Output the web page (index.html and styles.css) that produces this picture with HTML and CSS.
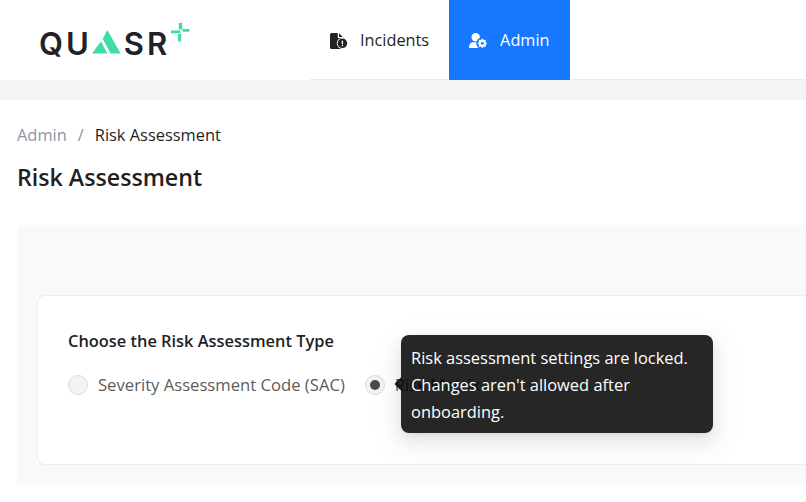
FILE: index.html
```html
<!DOCTYPE html>
<html lang="en">
<head>
<meta charset="utf-8">
<title>Risk Assessment</title>
<link rel="stylesheet" href="styles.css">
</head>
<body>
<header class="topbar">
  <div class="brand">
    <span class="wordmark">QU</span>
    <svg class="delta" width="29" height="24" viewBox="0 0 29 24" aria-hidden="true"><path fill="#3fdca4" d="M15.300 0 L28.700 23.400 H18.700 L10.700 8.700 Z M0 23.400 L9 11.300 L15.300 23.400 Z"/></svg>
    <span class="wordmark">SR</span>
    <svg class="plus" width="19" height="19" viewBox="0 0 19 19" aria-hidden="true"><path fill="#3fdca4" d="M0 7.500 H9.500 V10.300 H0 Z M11.500 6 H18.500 V8.800 H11.500 Z M7.800 0 H11.200 V6.500 H7.800 Z M7 11 H10.200 V18.500 H7 Z"/></svg>
  </div>
  <nav class="nav">
    <a class="nav-item">
      <svg class="nav-icon" width="20" height="18" viewBox="0 0 20 18" aria-hidden="true"><path fill="#222" d="M1.500 2H7.800V7H12.800V16.500a1.500 1.500 0 0 1-1.500 1.500H1.500A1.500 1.500 0 0 1 0 16.500V3.500A1.500 1.500 0 0 1 1.500 2Z M9 2.200 L12.800 6 H9Z"/><circle cx="12.400" cy="12.300" r="5.600" fill="#fff"/><circle cx="12.400" cy="12.300" r="4.800" fill="#222"/><path stroke="#fff" stroke-width="1.300" d="M12.400 9.800V13.300M12.400 14V15.200"/></svg>
      Incidents
    </a>
    <a class="nav-item active">
      <svg class="nav-icon" width="20" height="18" viewBox="0 0 20 18" aria-hidden="true"><circle cx="6.700" cy="6.300" r="4.200" fill="#fff"/><path fill="#fff" d="M0 17c0-4 2-5.700 4-5.700h5.500c2.500 0 3.500 2 3.500 5.700Z"/><circle cx="13.300" cy="12.300" r="6" fill="#1677ff"/><path stroke="#fff" stroke-width="1.800" d="M13.300 7.800v9M8.800 12.300h9M10.100 9.100l6.400 6.400M10.100 15.500l6.400-6.400"/><circle cx="13.300" cy="12.300" r="3.500" fill="#fff"/><circle cx="13.300" cy="12.300" r="1.400" fill="#1677ff"/></svg>
      Admin
    </a>
  </nav>
</header>
<div class="band"></div>
<main class="page">
  <div class="crumbs"><span class="crumb-link">Admin</span><span class="crumb-sep">/</span><span>Risk Assessment</span></div>
  <h1 class="title">Risk Assessment</h1>
  <section class="panel">
    <div class="card">
      <h2 class="card-title">Choose the Risk Assessment Type</h2>
      <div class="options">
        <label class="option"><span class="radio"></span><span class="option-text">Severity Assessment Code (SAC)</span></label>
        <label class="option"><span class="radio on"></span><span class="option-text">Risk Matrix</span></label>
        <div class="tooltip"><span class="tip-arrow"></span>Risk assessment settings are locked. Changes aren't allowed after onboarding.</div>
      </div>
    </div>
  </section>
</main>
</body>
</html>
```
FILE: styles.css
```css
* { box-sizing: border-box; }
html, body { margin: 0; padding: 0; }
body {
  width: 806px;
  height: 502px;
  overflow: hidden;
  background: #fff;
  font-family: "Open Sans", "Noto Sans", sans-serif;
  color: #1f1f1f;
}
.topbar { display: flex; height: 80px; background: #fff; }
.brand {
  width: 310px;
  display: flex;
  align-items: center;
  padding: 0 0 0 39px;
}
.wordmark {
  font-family: "Inter", sans-serif;
  font-size: 31px;
  font-weight: 600;
  letter-spacing: 3px;
  color: #1f2226;
  line-height: 1;
  margin-top: 7px;
}
.delta { margin: 3px 3px 0 0; }
.plus { margin: -16px 0 0 1px; }
.nav {
  flex: 1;
  display: flex;
  border-bottom: 1px solid #ececec;
}
.nav-item {
  display: flex;
  align-items: center;
  gap: 10px;
  padding: 0 20px;
  font-size: 16.3px;
  color: #1f1f1f;
  height: 80px;
}
.active { background: #1677ff; color: #fff; gap: 11px; }
.band { height: 20px; background: #f4f4f4; }
.page { padding: 24px 0 0 17px; }
.crumbs { display: flex; font-size: 16.4px; line-height: 22px; }
.crumb-link { color: #8c94a8; }
.crumb-sep { color: #8c94a8; margin: 0 11px; }
.title { margin: 15px 0 0; font-size: 23.2px; line-height: 32px; font-weight: 600; color: #1f1f1f; }
.panel {
  margin-top: 32px;
  height: 260px;
  padding: 70px 0 0 20px;
  background: #f8f9fb;
}
.card {
  height: 170px;
  background: #fff;
  border: 1px solid #eeeeee;
  border-right: 0;
  border-radius: 8px 0 0 8px;
  padding: 34px 30px;
}
.card-title { margin: 0 0 21px; font-size: 16.4px; line-height: 22px; font-weight: 600; color: #1f1f1f; }
.options { position: relative; display: flex; gap: 20px; }
.option { display: flex; align-items: center; gap: 10px; font-size: 16.65px; line-height: 24px; color: #5c5c5c; white-space: nowrap; }
.radio {
  width: 20px; height: 20px; border-radius: 50%;
  background: #f3f3f3; border: 1px solid #dcdcdc;
  display: inline-flex; align-items: center; justify-content: center;
}
.radio.on::after { content: ""; width: 10px; height: 10px; border-radius: 50%; background: #4a4a4a; }
.tooltip {
  position: absolute;
  left: 333px;
  top: -38px;
  width: 312px;
  height: 98px;
  padding: 9px 10px;
  background: rgba(0,0,0,.85);
  color: #fff;
  font-size: 16.45px;
  line-height: 27px;
  border-radius: 8px;
  box-shadow: 0 6px 16px rgba(0,0,0,.08), 0 3px 6px -4px rgba(0,0,0,.12), 0 9px 28px 8px rgba(0,0,0,.05);
}
.tip-arrow {
  position: absolute;
  left: -5px;
  top: 44px;
  width: 10px;
  height: 10px;
  background: rgba(0,0,0,.85);
  transform: rotate(45deg);
  clip-path: polygon(0 0, 0 100%, 100% 100%);
}
```
